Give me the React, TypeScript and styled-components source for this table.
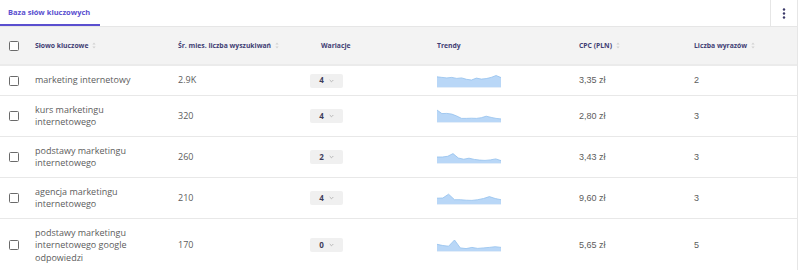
import React from "react";
import styled, { createGlobalStyle } from "styled-components";

const GlobalStyle = createGlobalStyle`
  body {
    margin: 0;
    background: #ffffff;
    font-family: "Open Sans", "Noto Sans", sans-serif;
  }
`;

interface Keyword {
  phrase: string;
  volume: string;
  variations: number;
  trend: number[];
  cpc: string;
  words: number;
}

const keywords: Keyword[] = [
  {
    phrase: "marketing internetowy",
    volume: "2.9K",
    variations: 4,
    trend: [0.85, 0.8, 0.76, 0.8, 0.72, 0.76, 0.64, 0.58, 0.74, 0.66, 0.7, 0.8, 0.96, 0.78],
    cpc: "3,35 zł",
    words: 2,
  },
  {
    phrase: "kurs marketingu internetowego",
    volume: "320",
    variations: 4,
    trend: [1, 0.7, 0.72, 0.66, 0.5, 0.3, 0.3, 0.32, 0.3, 0.36, 0.48, 0.38, 0.3, 0.26],
    cpc: "2,80 zł",
    words: 3,
  },
  {
    phrase: "podstawy marketingu internetowego",
    volume: "260",
    variations: 2,
    trend: [0.5, 0.5, 0.56, 0.78, 0.42, 0.32, 0.4, 0.3, 0.24, 0.22, 0.26, 0.34, 0.2],
    cpc: "3,43 zł",
    words: 3,
  },
  {
    phrase: "agencja marketingu internetowego",
    volume: "210",
    variations: 4,
    trend: [0.48, 0.5, 0.82, 0.36, 0.36, 0.32, 0.3, 0.36, 0.46, 0.62, 0.46, 0.36],
    cpc: "9,60 zł",
    words: 3,
  },
  {
    phrase: "podstawy marketingu internetowego google odpowiedzi",
    volume: "170",
    variations: 0,
    trend: [0.56, 0.46, 0.4, 0.92, 0.26, 0.2, 0.3, 0.22, 0.26, 0.3, 0.36, 0.3],
    cpc: "5,65 zł",
    words: 5,
  },
];

const columns = "35px 143px 132px 127px 142px 115px 1fr";

const Page = styled.div`
  width: 797px;
  border-right: 1px solid #e6e6e6;
`;

const TabBar = styled.div`
  display: flex;
  height: 26px;
  border-bottom: 1px solid #e6e6e6;
`;

const Tab = styled.div<{ $active?: boolean }>`
  display: flex;
  align-items: center;
  width: 100px;
  box-sizing: border-box;
  padding-left: 8px;
  font-size: 7.5px;
  font-weight: 700;
  color: #5a4fcf;
  border-bottom: 2px solid ${({ $active }) => ($active ? "#5a4fcf" : "transparent")};
`;

const TabSpacer = styled.div`
  flex: 1;
`;

const MenuButton = styled.div`
  width: 26px;
  display: flex;
  align-items: center;
  justify-content: center;
  border-left: 1px solid #e6e6e6;
`;

const HeaderRow = styled.div`
  display: grid;
  grid-template-columns: ${columns};
  align-items: center;
  height: 37px;
  background: #f3f3f3;
  border-bottom: 2px solid #ebebeb;
`;

const HeadCell = styled.div<{ $indent?: number }>`
  display: flex;
  align-items: center;
  gap: 4px;
  padding-left: ${({ $indent }) => $indent ?? 0}px;
  font-size: 6.8px;
  font-weight: 700;
  color: #3f3d73;
  white-space: nowrap;
`;

const Row = styled.div`
  display: grid;
  grid-template-columns: ${columns};
  align-items: center;
  padding: 7.5px 0;
  border-bottom: 1px solid #e8e8e8;
`;

const Cell = styled.div`
  display: flex;
  align-items: center;
  line-height: 12.5px;
`;

const CheckCell = styled(Cell)`
  padding-left: 9px;
`;

const Checkbox = styled.span`
  width: 10px;
  height: 10px;
  box-sizing: border-box;
  border: 1.3px solid #6a6a6a;
  border-radius: 1.5px;
  background: #fff;
`;

const Phrase = styled(Cell)`
  max-width: 114px;
  font-size: 9px;
  color: #5c5c5c;
`;

const Volume = styled(Cell)`
  font-size: 9px;
  color: #5c5c5c;
`;

const VariantButton = styled.div`
  display: flex;
  align-items: center;
  justify-content: center;
  gap: 5px;
  width: 33px;
  height: 14px;
  border-radius: 2px;
  background: #f0f0f0;
  font-size: 8px;
  font-weight: 700;
  color: #3f3d5a;
`;

const NumberText = styled(Cell)`
  font-family: "Liberation Sans", Arial, sans-serif;
  font-size: 9px;
  color: #5c5c5c;
`;

const SortIcon = () => (
  <svg width="4" height="7" viewBox="0 0 4 7">
    <path d="M2 0.5 L3.6 2.6 H0.4 Z" fill="#d2d2d2" />
    <path d="M2 6.5 L3.6 4.4 H0.4 Z" fill="#d2d2d2" />
  </svg>
);

const Chevron = () => (
  <svg width="5" height="4" viewBox="0 0 5 4">
    <path d="M0.7 1 L2.5 2.8 L4.3 1" fill="none" stroke="#aaa" strokeWidth="0.8" />
  </svg>
);

const Kebab = () => (
  <svg width="4" height="11" viewBox="0 0 4 11">
    <circle cx="2" cy="1.5" r="1.2" fill="#3a3868" />
    <circle cx="2" cy="5.5" r="1.2" fill="#3a3868" />
    <circle cx="2" cy="9.5" r="1.2" fill="#3a3868" />
  </svg>
);

const Sparkline = ({ values }: { values: number[] }) => {
  const w = 64;
  const h = 13;
  const step = w / (values.length - 1);
  const pts = values.map((v, i) => `${(i * step).toFixed(1)},${(h - v * (h - 1)).toFixed(1)}`);
  const line = `M${pts.join(" L")}`;
  return (
    <svg width={w} height={h + 1} viewBox={`0 0 ${w} ${h + 1}`} style={{ display: "block" }}>
      <path d={`${line} L${w},${h} L0,${h} Z`} fill="#b9d7f7" />
      <path d={line} fill="none" stroke="#93c0ee" strokeWidth="0.8" />
      <line x1="0" y1={h + 0.5} x2={w} y2={h + 0.5} stroke="#e4eef9" strokeWidth="1" />
    </svg>
  );
};

export default function App() {
  return (
    <Page>
      <GlobalStyle />
      <TabBar>
        <Tab $active>Baza słów kluczowych</Tab>
        <TabSpacer />
        <MenuButton>
          <Kebab />
        </MenuButton>
      </TabBar>

      <HeaderRow>
        <CheckCell>
          <Checkbox />
        </CheckCell>
        <HeadCell>
          Słowo kluczowe <SortIcon />
        </HeadCell>
        <HeadCell>
          Śr. mies. liczba wyszukiwań <SortIcon />
        </HeadCell>
        <HeadCell $indent={11}>Wariacje</HeadCell>
        <HeadCell>Trendy</HeadCell>
        <HeadCell>
          CPC (PLN) <SortIcon />
        </HeadCell>
        <HeadCell>
          Liczba wyrazów <SortIcon />
        </HeadCell>
      </HeaderRow>

      {keywords.map((k) => (
        <Row key={k.phrase}>
          <CheckCell>
            <Checkbox />
          </CheckCell>
          <Phrase>{k.phrase}</Phrase>
          <Volume>{k.volume}</Volume>
          <Cell>
            <VariantButton>
              {k.variations} <Chevron />
            </VariantButton>
          </Cell>
          <Cell>
            <Sparkline values={k.trend} />
          </Cell>
          <NumberText>{k.cpc}</NumberText>
          <NumberText>{k.words}</NumberText>
        </Row>
      ))}
    </Page>
  );
}
